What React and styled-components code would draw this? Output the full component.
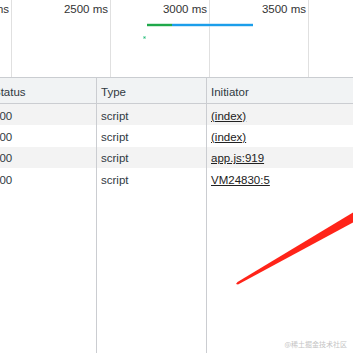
import React from 'react';
import styled, { createGlobalStyle } from 'styled-components';

const GlobalStyle = createGlobalStyle`
  html, body {
    margin: 0;
    padding: 0;
    background: #fff;
    overflow: hidden;
  }
  body {
    font-family: "Liberation Sans", Arial, sans-serif;
    font-size: 11.5px;
    color: #303942;
  }
`;

const Page = styled.div`
  position: relative;
  width: 353px;
  height: 353px;
  overflow: hidden;
  display: flex;
  flex-direction: column;
`;

const Timeline = styled.div`
  position: relative;
  height: 77px;
  flex: none;
  border-bottom: 1px solid #cacdd1;
  overflow: hidden;
`;

const TickRow = styled.div`
  display: flex;
  height: 100%;
  margin-left: -87px;
`;

const Tick = styled.div`
  flex: none;
  width: 99px;
  box-sizing: border-box;
  border-right: 1px solid #e0e0e0;
  padding: 2px 2px 0 0;
  text-align: right;
  line-height: 14px;
  color: #333;
  white-space: nowrap;
`;

const Bars = styled.svg`
  position: absolute;
  left: 0;
  top: 0;
`;

const Table = styled.div`
  flex: 1;
  display: grid;
  grid-template-columns: 108px 110px 1fr;
  grid-template-rows: 26px repeat(4, 21.33px) 1fr;
  margin-left: -11px;
`;

const Cell = styled.div`
  box-sizing: border-box;
  padding: 2px 0 0 4px;
  display: flex;
  align-items: center;
  white-space: nowrap;
  overflow: hidden;
  border-right: ${p => (p.$last ? 'none' : '1px solid #cbcdd1')};
  background: ${p => (p.$header ? '#f1f3f4' : p.$alt ? '#f3f3f3' : '#fff')};
  border-bottom: ${p => (p.$header ? '1px solid #cbcdd1' : 'none')};
  color: #303942;
`;

const Link = styled.span`
  color: #222;
  text-decoration: underline;
  text-underline-offset: 1px;
`;

const Arrow = styled.svg`
  position: absolute;
  left: 0;
  top: 0;
  pointer-events: none;
`;

const Watermark = styled.div`
  position: absolute;
  right: 6px;
  bottom: 4px;
  font-family: "Noto Sans CJK SC", sans-serif;
  font-size: 7px;
  color: #c4c4c4;
`;

const ticks = ['2000 ms', '2500 ms', '3000 ms', '3500 ms', '4000 ms'];

const rows = [
  { status: '200', type: 'script', initiator: '(index)' },
  { status: '200', type: 'script', initiator: '(index)' },
  { status: '200', type: 'script', initiator: 'app.js:919' },
  { status: '200', type: 'script', initiator: 'VM24830:5' },
];

export default function App() {
  return (
    <Page>
      <GlobalStyle />
      <Timeline>
        <TickRow>
          {ticks.map(t => (
            <Tick key={t}>{t}</Tick>
          ))}
        </TickRow>
        <Bars width="353" height="77">
          <rect x="147" y="23.5" width="25" height="3" fill="#9fdcb0" />
          <rect x="147" y="24" width="25" height="2" fill="#1fa84b" />
          <rect x="172" y="23.5" width="81" height="3" fill="#9fd3f5" />
          <rect x="172" y="24" width="81" height="2" fill="#1b9eea" />
          <rect x="143" y="36" width="3" height="3" fill="#a8e6ca" />
          <rect x="144" y="37" width="1" height="1" fill="#2fb67c" />
        </Bars>
      </Timeline>
      <Table>
        <Cell $header>Status</Cell>
        <Cell $header>Type</Cell>
        <Cell $header $last>Initiator</Cell>
        {rows.map((r, i) => (
          <React.Fragment key={i}>
            <Cell $alt={i % 2 === 0}>{r.status}</Cell>
            <Cell $alt={i % 2 === 0}>{r.type}</Cell>
            <Cell $alt={i % 2 === 0} $last>
              <Link>{r.initiator}</Link>
            </Cell>
          </React.Fragment>
        ))}
        <Cell />
        <Cell />
        <Cell $last />
      </Table>
      <Arrow width="353" height="353">
        <polygon points="236,284 237.5,282 353,212.5 353,222.5 238,284.5" fill="#ff2419" />
      </Arrow>
      <Watermark>@稀土掘金技术社区</Watermark>
    </Page>
  );
}
